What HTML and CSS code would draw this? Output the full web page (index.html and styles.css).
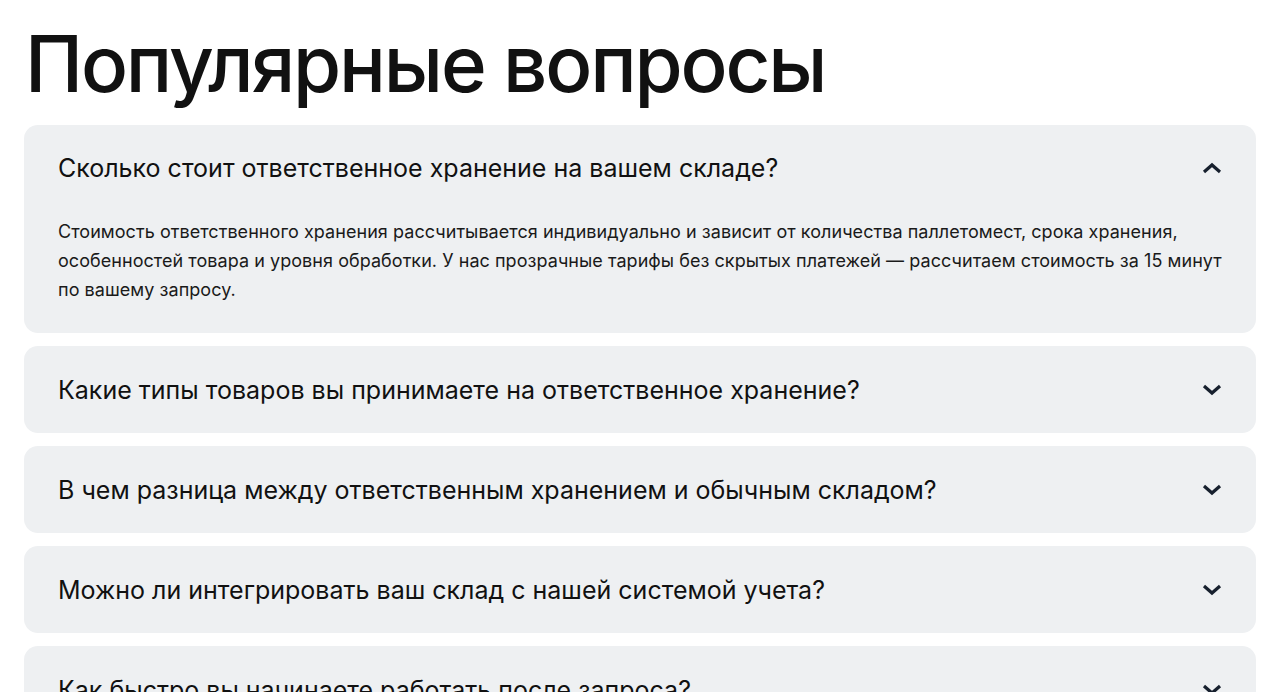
FILE: index.html
```html
<!DOCTYPE html>
<html lang="ru">
<head>
    <meta charset="UTF-8">
    <meta name="viewport" content="width=device-width, initial-scale=1.0">
    <title>Популярные вопросы</title>
    <link rel="stylesheet" href="styles.css">
</head>
<body>
    <section class="faq">
        <h1 class="faq-title">Популярные вопросы</h1>

        <div class="faq-list">
            <div class="faq-item open">
                <div class="faq-question">
                    <span>Сколько стоит ответственное хранение на вашем складе?</span>
                    <svg class="chevron" width="20" height="12" viewBox="0 0 20 12"><polyline points="2,10 10,3 18,10"/></svg>
                </div>
                <p class="faq-answer">Стоимость ответственного хранения рассчитывается индивидуально и зависит от количества паллетомест, срока хранения, особенностей товара и уровня обработки. У нас прозрачные тарифы без скрытых платежей — рассчитаем стоимость за 15 минут по вашему запросу.</p>
            </div>

            <div class="faq-item">
                <div class="faq-question">
                    <span>Какие типы товаров вы принимаете на ответственное хранение?</span>
                    <svg class="chevron" width="20" height="12" viewBox="0 0 20 12"><polyline points="2,2 10,9 18,2"/></svg>
                </div>
            </div>

            <div class="faq-item">
                <div class="faq-question">
                    <span>В чем разница между ответственным хранением и обычным складом?</span>
                    <svg class="chevron" width="20" height="12" viewBox="0 0 20 12"><polyline points="2,2 10,9 18,2"/></svg>
                </div>
            </div>

            <div class="faq-item">
                <div class="faq-question">
                    <span>Можно ли интегрировать ваш склад с нашей системой учета?</span>
                    <svg class="chevron" width="20" height="12" viewBox="0 0 20 12"><polyline points="2,2 10,9 18,2"/></svg>
                </div>
            </div>

            <div class="faq-item">
                <div class="faq-question">
                    <span>Как быстро вы начинаете работать после запроса?</span>
                    <svg class="chevron" width="20" height="12" viewBox="0 0 20 12"><polyline points="2,2 10,9 18,2"/></svg>
                </div>
            </div>
        </div>
    </section>
</body>
</html>
```

FILE: styles.css
```css
body{
    margin: 0;
    font-family: Inter, "Noto Sans", sans-serif;
    background-color: #ffffff;
    color: #111111;
}

.faq{
    padding: 20px 24px 40px;
}

.faq-title{
    margin: 0 0 17px 1px;
    font-size: 78px;
    font-weight: 500;
    line-height: 88px;
    letter-spacing: -2.2px;
}

.faq-list{
    display: flex;
    flex-direction: column;
    gap: 13px;
}

.faq-item{
    background-color: #eef0f2;
    border-radius: 14px;
    padding: 0 34px;
}

.faq-question{
    display: flex;
    justify-content: space-between;
    align-items: center;
    height: 87px;
    font-size: 25px;
    font-weight: 400;
}

.open .faq-question{
    height: 86px;
}

.chevron{
    fill: none;
    stroke: #17202e;
    stroke-width: 3.2;
}

.faq-answer{
    margin: 6px 0 0;
    padding: 0 0 29px;
    font-size: 18px;
    line-height: 29px;
    letter-spacing: 0.05px;
    color: #1a1a1a;
}
```
